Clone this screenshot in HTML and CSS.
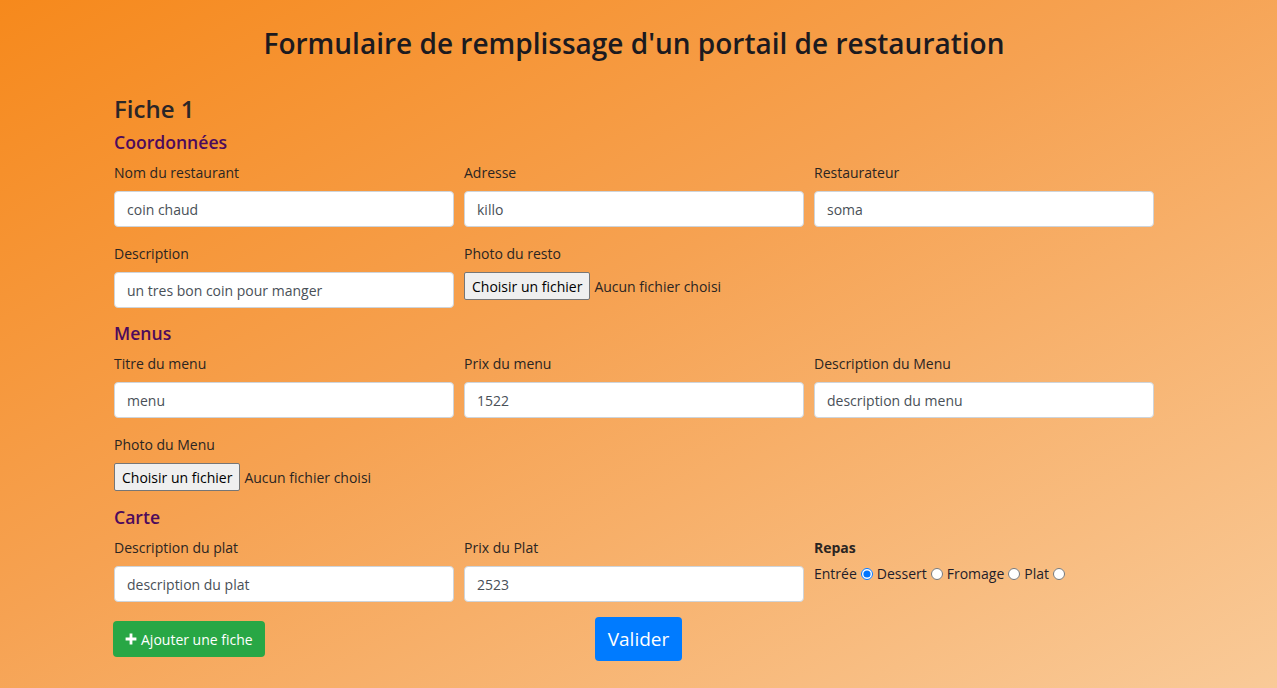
FILE: index.html
```html
<!DOCTYPE html>
<html lang="fr">
<head>
<meta charset="utf-8">
<title>Portail de restauration</title>
<link rel="stylesheet" href="styles.css">
</head>
<body>
<h1 class="title">Formulaire de remplissage d'un portail de restauration</h1>
<form class="sheet">
  <h2 class="sheet-title">Fiche 1</h2>

  <h3 class="section-title">Coordonnées</h3>
  <div class="grid">
    <div class="group"><label class="lbl">Nom du restaurant</label><input class="field" type="text" value="coin chaud"></div>
    <div class="group"><label class="lbl">Adresse</label><input class="field" type="text" value="killo"></div>
    <div class="group"><label class="lbl">Restaurateur</label><input class="field" type="text" value="soma"></div>
    <div class="group"><label class="lbl">Description</label><input class="field" type="text" value="un tres bon coin pour manger"></div>
    <div class="group"><label class="lbl">Photo du resto</label><div class="file"><button type="button" class="file-btn">Choisir un fichier</button><span class="file-name">Aucun fichier choisi</span></div></div>
  </div>

  <h3 class="section-title">Menus</h3>
  <div class="grid">
    <div class="group"><label class="lbl">Titre du menu</label><input class="field" type="text" value="menu"></div>
    <div class="group"><label class="lbl">Prix du menu</label><input class="field" type="text" value="1522"></div>
    <div class="group"><label class="lbl">Description du Menu</label><input class="field" type="text" value="description du menu"></div>
    <div class="group"><label class="lbl">Photo du Menu</label><div class="file"><button type="button" class="file-btn">Choisir un fichier</button><span class="file-name">Aucun fichier choisi</span></div></div>
  </div>

  <h3 class="section-title">Carte</h3>
  <div class="grid">
    <div class="group"><label class="lbl">Description du plat</label><input class="field" type="text" value="description du plat"></div>
    <div class="group"><label class="lbl">Prix du Plat</label><input class="field" type="text" value="2523"></div>
    <div class="group">
      <label class="lbl lbl-bold">Repas</label>
      <div class="radios">
        <span>Entrée</span><input class="radio" type="radio" name="repas" checked>
        <span>Dessert</span><input class="radio" type="radio" name="repas">
        <span>Fromage</span><input class="radio" type="radio" name="repas">
        <span>Plat</span><input class="radio" type="radio" name="repas">
      </div>
    </div>
  </div>
</form>
<div class="actions">
  <div class="actions-left">
    <button type="button" class="btn btn-green"><svg class="plus" viewBox="0 0 12 12" width="12" height="12"><path d="M4.6 0.6h2.8v4h4v2.8h-4v4H4.6v-4h-4V4.6h4z" fill="#fff"/></svg>Ajouter une fiche</button>
  </div>
  <button type="button" class="btn btn-blue">Valider</button>
  <div></div>
</div>
</body>
</html>
```
FILE: styles.css
```css
html, body {
  margin: 0;
  padding: 0;
}
body {
  min-height: 688px;
  background: linear-gradient(to bottom right, #f6891c 0%, #f6a252 45%, #f9ca98 100%);
  font-family: "Open Sans", "Noto Sans", sans-serif;
  color: #212529;
  font-size: 14px;
}
.title {
  margin: 26px 0 0 114px;
  width: 1040px;
  text-align: center;
  font-size: 28px;
  line-height: 35px;
  font-weight: 600;
  color: #1c1a1f;
}
.sheet {
  margin: 33px 0 0 114px;
  width: 1040px;
}
.sheet-title {
  margin: 0;
  font-size: 24px;
  line-height: 30px;
  font-weight: 600;
  color: #2a2628;
}
.section-title {
  margin: 14px 0 9px;
  font-size: 17.6px;
  line-height: 22px;
  font-weight: 600;
  color: #4d0a5c;
}
.sheet-title + .section-title {
  margin-top: 7px;
}
.grid {
  display: grid;
  grid-template-columns: repeat(3, 340px);
  column-gap: 10px;
  row-gap: 16px;
}
.group {
  display: flex;
  flex-direction: column;
  align-items: flex-start;
}
.lbl {
  line-height: 21px;
  margin-bottom: 8px;
  color: #2b2522;
}
.lbl-bold {
  font-weight: 700;
  margin-bottom: 6px;
}
.field {
  box-sizing: border-box;
  width: 340px;
  height: 36px;
  padding: 0 12px;
  border: 1px solid #ced4da;
  border-radius: 4px;
  background: #fff;
  font-family: inherit;
  font-size: 14px;
  color: #495057;
  outline: none;
}
.file {
  display: flex;
  align-items: center;
  height: 29px;
}
.file-btn {
  box-sizing: border-box;
  height: 28px;
  padding: 0 7px;
  margin: 0 4px 1px 0;
  border: 1px solid #767676;
  border-radius: 2px;
  background: #efefef;
  font-family: inherit;
  font-size: 14px;
  color: #000;
}
.file-name {
  color: #2b2522;
}
.radios {
  display: flex;
  align-items: center;
  line-height: 21px;
  margin-top: -1px;
  color: #1f1d2a;
}
.radio {
  width: 12px;
  height: 12px;
  margin: 0 4px 0 4px;
}
.actions {
  display: grid;
  grid-template-columns: 1fr auto 1fr;
  align-items: center;
  margin-top: 15px;
  padding-bottom: 20px;
}
.actions-left {
  padding-left: 113px;
}
.btn {
  border: none;
  border-radius: 4px;
  color: #fff;
  font-family: inherit;
  cursor: pointer;
}
.btn-green {
  display: inline-flex;
  align-items: center;
  gap: 4px;
  height: 36px;
  padding: 0 12px;
  background: #28a745;
  font-size: 14px;
}
.btn-blue {
  height: 44px;
  padding: 0 13px;
  background: #007bff;
  font-size: 19px;
}
```
